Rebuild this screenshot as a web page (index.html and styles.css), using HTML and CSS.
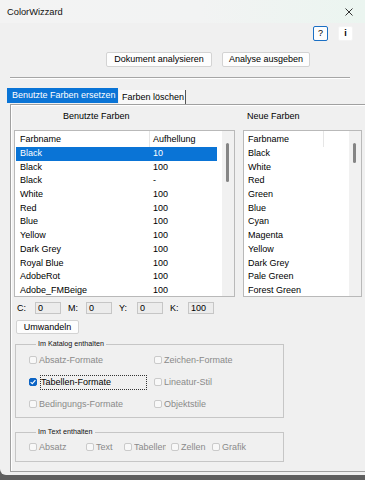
FILE: index.html
```html
<!DOCTYPE html>
<html lang="de">
<head>
<meta charset="utf-8">
<title>ColorWizzard</title>
<link rel="stylesheet" href="styles.css">
</head>
<body>
<div class="window">
  <div class="titlebar">
    <span class="title">ColorWizzard</span>
    <svg class="close" width="8" height="8" viewBox="0 0 8 8"><path d="M0.5 0.5 L7.5 7.5 M7.5 0.5 L0.5 7.5" stroke="#333" stroke-width="1" fill="none"/></svg>
  </div>
  <div class="helprow">
    <button class="iconbtn focused">?</button>
    <button class="iconbtn info">i</button>
  </div>
  <div class="actions">
    <button class="btn btn-analyse">Dokument analysieren</button>
    <button class="btn btn-output">Analyse ausgeben</button>
  </div>
  <div class="sep"></div>
  <div class="tabs">
    <div class="tab active">Benutzte Farben ersetzen</div>
    <div class="tab other">Farben löschen</div>
  </div>
  <div class="panel">
    <div class="lists">
      <div class="col col-left">
        <div class="col-title title-left">Benutzte Farben</div>
        <div class="listbox list-left">
          <div class="items">
            <div class="head"><span class="hc1">Farbname</span><span class="hc2">Aufhellung</span></div>
            <div class="row selected"><span>Black</span><span>10</span></div>
            <div class="row"><span>Black</span><span>100</span></div>
            <div class="row"><span>Black</span><span>-</span></div>
            <div class="row"><span>White</span><span>100</span></div>
            <div class="row"><span>Red</span><span>100</span></div>
            <div class="row"><span>Blue</span><span>100</span></div>
            <div class="row"><span>Yellow</span><span>100</span></div>
            <div class="row"><span>Dark Grey</span><span>100</span></div>
            <div class="row"><span>Royal Blue</span><span>100</span></div>
            <div class="row"><span>AdobeRot</span><span>100</span></div>
            <div class="row"><span>Adobe_FMBeige</span><span>100</span></div>
          </div>
          <div class="track"><div class="thumb thumb-left"></div></div>
        </div>
      </div>
      <div class="col col-right">
        <div class="col-title title-right">Neue Farben</div>
        <div class="listbox list-right">
          <div class="items">
            <div class="head"><span class="hc1">Farbname</span></div>
            <div class="row"><span>Black</span></div>
            <div class="row"><span>White</span></div>
            <div class="row"><span>Red</span></div>
            <div class="row"><span>Green</span></div>
            <div class="row"><span>Blue</span></div>
            <div class="row"><span>Cyan</span></div>
            <div class="row"><span>Magenta</span></div>
            <div class="row"><span>Yellow</span></div>
            <div class="row"><span>Dark Grey</span></div>
            <div class="row"><span>Pale Green</span></div>
            <div class="row"><span>Forest Green</span></div>
          </div>
          <div class="track"><div class="thumb thumb-right"></div></div>
        </div>
      </div>
    </div>
    <div class="cmyk">
      <div class="cm"><span class="cm-label">C:</span><span class="cm-box">0</span></div>
      <div class="cm"><span class="cm-label">M:</span><span class="cm-box">0</span></div>
      <div class="cm"><span class="cm-label">Y:</span><span class="cm-box">0</span></div>
      <div class="cm"><span class="cm-label">K:</span><span class="cm-box">100</span></div>
    </div>
    <button class="btn convert">Umwandeln</button>
    <fieldset class="group group-catalog">
      <legend>Im Katalog enthalten</legend>
      <div class="grid">
        <label class="chk disabled"><span class="cb"></span>Absatz-Formate</label>
        <label class="chk disabled"><span class="cb"></span>Zeichen-Formate</label>
        <label class="chk"><span class="cb checked"><svg width="8" height="8" viewBox="0 0 8 8"><path d="M1.6 4.1 L3.3 5.7 L6.4 2.2" stroke="#fff" stroke-width="1.1" fill="none"/></svg></span><span class="focus">Tabellen-Formate</span></label>
        <label class="chk disabled"><span class="cb"></span>Lineatur-Stil</label>
        <label class="chk disabled"><span class="cb"></span>Bedingungs-Formate</label>
        <label class="chk disabled"><span class="cb"></span>Objektstile</label>
      </div>
    </fieldset>
    <fieldset class="group group-text">
      <legend>Im Text enthalten</legend>
      <div class="line">
        <label class="chk disabled w1"><span class="cb"></span>Absatz</label>
        <label class="chk disabled w2"><span class="cb"></span>Text</label>
        <label class="chk disabled w3"><span class="cb"></span><span class="clip">Tabellen</span></label>
        <label class="chk disabled w4"><span class="cb"></span>Zellen</label>
        <label class="chk disabled"><span class="cb"></span>Grafik</label>
      </div>
    </fieldset>
  </div>
</div>
</body>
</html>
```

FILE: styles.css
```css
* { box-sizing: border-box; }

body {
  margin: 0;
  background: #5f5f5f;
  font-family: "Liberation Sans", Arial, sans-serif;
  font-size: 9px;
  color: #000;
}

.window {
  width: 365px;
  height: 475px;
  background: #f0f0f0;
  display: flex;
  flex-direction: column;
  border-bottom-left-radius: 6px;
  overflow: hidden;
}

.titlebar {
  height: 23px;
  flex: none;
  display: flex;
  align-items: center;
  justify-content: space-between;
  padding: 0 12px 0 7px;
  background: linear-gradient(90deg, #f3f3f3 0%, #f2f3f3 55%, #ebf5f0 100%);
}

.title {
  color: #111;
  font-size: 9.3px;
}

.close { display: block; }

.helprow {
  display: flex;
  justify-content: flex-end;
  gap: 10px;
  padding-right: 12px;
  margin-top: 3px;
}

.iconbtn {
  width: 15px;
  height: 15px;
  padding: 0;
  margin: 0;
  font: inherit;
  font-size: 9px;
  line-height: 13px;
  background: #fdfdfd;
  border: 1px solid #e2e2e2;
  border-radius: 2px;
  color: #000;
}

.iconbtn.focused { border-color: #1a6fc4; }
.iconbtn.info { font-weight: bold; border-color: #f4f4f4; background: #fff; }

.actions {
  display: flex;
  gap: 10px;
  padding-left: 106px;
  margin-top: 11px;
}

.btn {
  height: 15px;
  margin: 0;
  padding: 0;
  font: inherit;
  line-height: 13px;
  color: #000;
  background: #fdfdfd;
  border: 1px solid #d3d3d3;
  border-radius: 2px;
}

.btn-analyse { width: 106px; }
.btn-output { width: 88px; }

.sep {
  margin: 10px 0 0 10px;
  width: 340px;
  height: 2px;
  border-top: 1px solid #a6a6a6;
  border-bottom: 1px solid #ffffff;
}

.tabs {
  display: flex;
  align-items: flex-start;
  height: 16px;
  margin-top: 9px;
  padding-left: 7px;
}

.tab { white-space: nowrap; }

.tab.active {
  width: 111px;
  height: 15px;
  line-height: 15px;
  padding-left: 5px;
  background: #0a74d6;
  color: #fff;
}

.tab.other {
  margin-top: 2px;
  margin-left: 1px;
  height: 14px;
  line-height: 14px;
  width: 67px;
  padding-left: 3px;
  background: #f9f9f9;
  border-right: 1px solid #555;
}

.panel {
  margin-left: 10px;
  height: 368px;
  flex: none;
  display: flex;
  flex-direction: column;
  align-items: flex-start;
  border-top: 1px solid #a0a0a0;
  border-left: 1px solid #a0a0a0;
  border-bottom: 1px solid #a0a0a0;
  box-shadow: inset 1px 1px 0 #ffffff;
}

.lists {
  display: flex;
  gap: 8px;
  padding-left: 3px;
}

.col-title {
  height: 25px;
  padding-top: 4px;
  line-height: 14px;
  white-space: nowrap;
}

.title-left { padding-left: 49px; }
.title-right { padding-left: 4px; }

.listbox {
  height: 167px;
  display: flex;
  background: #fff;
  border: 1px solid #b9b9b9;
}

.list-left { width: 221px; }
.list-right { width: 119px; }

.items {
  flex: 1;
  overflow: hidden;
}

.track {
  width: 12px;
  flex: none;
  background: #f1f1f1;
  padding: 12px 0 0 4px;
}

.thumb {
  width: 3px;
  background: #858585;
  border-radius: 2px;
}

.thumb-left { height: 39px; }
.thumb-right { height: 20px; }

.head {
  height: 16px;
  display: flex;
  line-height: 16px;
}

.head .hc1 {
  border-right: 1px solid #e6e6e6;
  white-space: nowrap;
}

.list-left .hc1 { width: 135px; padding-left: 5px; }
.list-left .hc2 { padding-left: 3px; }
.list-right .hc1 { width: 80px; padding-left: 4px; }

.row {
  height: 13.7px;
  line-height: 13.7px;
  display: grid;
  white-space: nowrap;
  margin: 0 5px 0 1px;
}

.list-left .row { grid-template-columns: 133px 1fr; padding-left: 4px; }
.list-right .row { grid-template-columns: 1fr; padding-left: 3px; }

.row.selected {
  background: #0a74d6;
  color: #fff;
}

.cmyk {
  display: flex;
  margin-top: 5px;
  padding-left: 6px;
  height: 12px;
}

.cm {
  display: flex;
  align-items: center;
  width: 51px;
}

.cm-label { width: 18px; }

.cm-box {
  width: 26px;
  height: 12px;
  line-height: 10px;
  padding-left: 2px;
  background: #ececec;
  border: 1px solid #c6c6c6;
}

.convert {
  margin: 6px 0 0 5px;
  width: 63px;
  height: 14px;
  line-height: 12px;
}

.group {
  margin: 6px 0 0 4px;
  width: 269px;
  min-width: 0;
  padding: 0 0 3px 13px;
  border: 1px solid #c6c6c6;
}

.group-catalog { padding-bottom: 2px; }
.group-text { margin-top: 10px; }

.group legend {
  font-size: 7.2px;
  line-height: 8px;
  padding: 0 2px;
  margin-left: 7px;
  color: #111;
}

.grid {
  display: grid;
  grid-template-columns: 125px 1fr;
  grid-auto-rows: 22px;
  align-items: center;
  padding-top: 1px;
}

.line {
  display: flex;
  align-items: center;
  height: 22px;
}

.chk {
  display: flex;
  align-items: center;
  white-space: nowrap;
}

.chk.disabled { color: #8a8a8a; }

.w1 { width: 57px; }
.w2 { width: 38px; }
.w3 { width: 47px; }
.w4 { width: 41px; }

.clip {
  width: 32px;
  overflow: hidden;
}

.cb {
  width: 8px;
  height: 8px;
  flex: none;
  margin-right: 2px;
  border: 1px solid #cacaca;
  border-radius: 2px;
  background: #f8f8f8;
}

.cb.checked {
  background: #0b63c4;
  border-color: #0b63c4;
  position: relative;
}

.cb.checked svg {
  position: absolute;
  left: -1px;
  top: -1px;
}

.focus {
  margin-left: 1px;
  width: 107px;
  height: 15px;
  line-height: 13px;
  border: 1px dotted #333;
  color: #000;
}
```
